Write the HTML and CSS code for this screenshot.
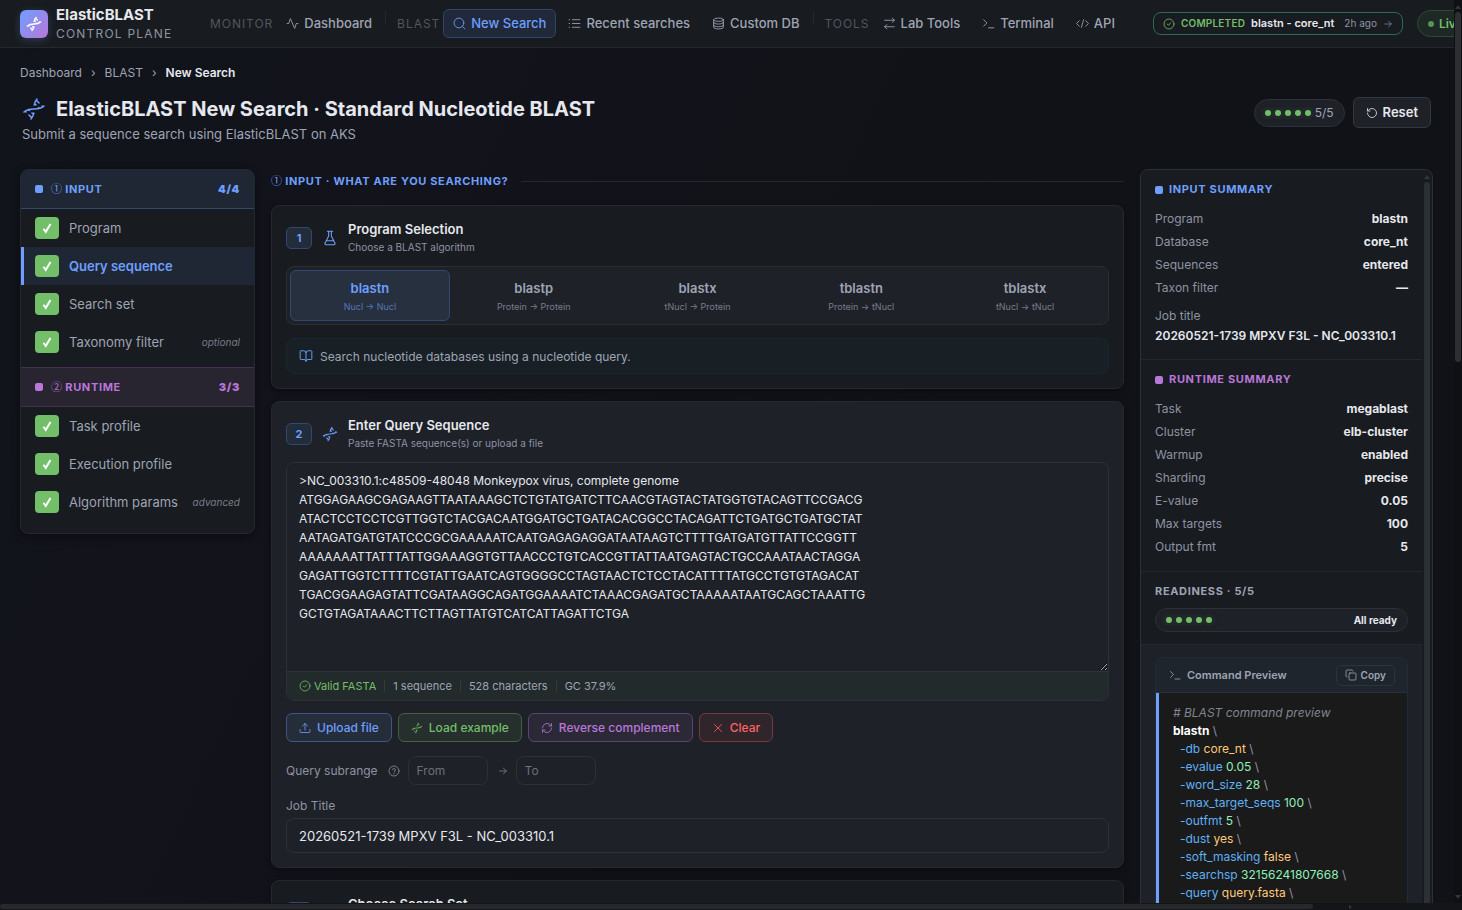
FILE: index.html
```html
<!DOCTYPE html>
<html lang="en">
<head>
<meta charset="utf-8">
<title>ElasticBLAST Control Plane</title>
<link rel="stylesheet" href="styles.css">
</head>
<body>
<svg class="defs" aria-hidden="true">
  <symbol id="dna" viewBox="0 0 24 24"><path d="M2 15c6.667-6 13.333 0 20-6M9 22c1.798-1.998 2.518-3.995 2.807-5.993M15 2c-1.798 1.998-2.518 3.995-2.807 5.993M17 6l-2.500-2.500M14 8l-1-1M7 18l2.500 2.500M3.500 14.500l.5.5M20 9l.5.5M6.500 12.500l1 1M16.500 10.500l1 1M10 16l1.500 1.500"/></symbol>
  <symbol id="activity" viewBox="0 0 24 24"><path d="M22 12h-3l-3 9L8 3l-3 9H2"/></symbol>
  <symbol id="search" viewBox="0 0 24 24"><circle cx="11" cy="11" r="9"/><path d="M22 22l-4.500-4.500"/></symbol>
  <symbol id="list" viewBox="0 0 24 24"><path d="M8 5h14M8 12h14M8 19h14M2 5h1M2 12h1M2 19h1"/></symbol>
  <symbol id="db" viewBox="0 0 24 24"><ellipse cx="12" cy="5" rx="9" ry="3"/><path d="M3 5v14c0 1.700 4 3 9 3s9-1.300 9-3V5M3 10c0 1.700 4 3 9 3s9-1.300 9-3M3 15c0 1.700 4 3 9 3s9-1.300 9-3"/></symbol>
  <symbol id="swap" viewBox="0 0 24 24"><path d="M17 2l4 4-4 4M3 6h18M7 22l-4-4 4-4M21 18H3"/></symbol>
  <symbol id="term" viewBox="0 0 24 24"><path d="M3 17l6-6-6-6M12 20h10"/></symbol>
  <symbol id="code" viewBox="0 0 24 24"><path d="M18 17l5-5-5-5M6 7l-5 5 5 5M14 5l-4 14"/></symbol>
  <symbol id="okay" viewBox="0 0 24 24"><circle cx="12" cy="12" r="10"/><path d="M8.500 12l2.500 2.500 4.500-5"/></symbol>
  <symbol id="arrow" viewBox="0 0 24 24"><path d="M4 12h16M13 5l7 7-7 7"/></symbol>
  <symbol id="reset" viewBox="0 0 24 24"><path d="M3 12a9 9 0 1 0 9-9 9.750 9.750 0 0 0-6.740 2.740L3 8M3 3v5h5"/></symbol>
  <symbol id="flask" viewBox="0 0 24 24"><path d="M8 2h8M10 2v7L4.500 20c-.5 1 .2 2 1.300 2h12.400c1.100 0 1.800-1 1.300-2L14 9V2M7 16h10"/></symbol>
  <symbol id="book" viewBox="0 0 24 24"><path d="M12 7v14M3 18a1 1 0 0 1-1-1V4a1 1 0 0 1 1-1h5a4 4 0 0 1 4 4 4 4 0 0 1 4-4h5a1 1 0 0 1 1 1v13a1 1 0 0 1-1 1h-6a3 3 0 0 0-3 3 3 3 0 0 0-3-3z"/></symbol>
  <symbol id="upload" viewBox="0 0 24 24"><path d="M12 3v13M7 8l5-5 5 5M2 15v4a2 2 0 0 0 2 2h16a2 2 0 0 0 2-2v-4"/></symbol>
  <symbol id="refresh" viewBox="0 0 24 24"><path d="M3 12a9 9 0 0 1 9-9 9.750 9.750 0 0 1 6.740 2.740L21 8M21 3v5h-5M21 12a9 9 0 0 1-9 9 9.750 9.750 0 0 1-6.740-2.740L3 16M8 16H3v5"/></symbol>
  <symbol id="cross" viewBox="0 0 24 24"><path d="M19 5L5 19M5 5l14 14"/></symbol>
  <symbol id="help" viewBox="0 0 24 24"><circle cx="12" cy="12" r="10"/><path d="M9 9a3 3 0 0 1 5.800 1c0 2-2.800 2.500-2.800 4M12 17v.5"/></symbol>
  <symbol id="copy" viewBox="0 0 24 24"><rect x="8" y="8" width="14" height="14" rx="2"/><path d="M4 16c-1.100 0-2-.9-2-2V4c0-1.100.9-2 2-2h10c1.100 0 2 .9 2 2"/></symbol>
  <symbol id="tick" viewBox="0 0 24 24"><path d="M5 13.500L9.500 20 19 4"/></symbol>
</svg>
<div class="shell">
<div class="app">
  <header class="topbar">
    <div class="logo"><svg class="ico i16"><use href="#dna"/></svg></div>
    <div class="brand"><strong>ElasticBLAST</strong><span>CONTROL PLANE</span></div>
    <nav class="nav" aria-label="Main">
      <span class="nav-label">MONITOR</span>
      <a class="nav-item" href="#"><svg class="ico i13"><use href="#activity"/></svg>Dashboard</a>
      <span class="nav-sep"></span>
      <span class="nav-label">BLAST</span>
      <a class="nav-item on" href="#"><svg class="ico i13"><use href="#search"/></svg>New Search</a>
      <a class="nav-item" href="#"><svg class="ico i13"><use href="#list"/></svg>Recent searches</a>
      <a class="nav-item" href="#"><svg class="ico i13"><use href="#db"/></svg>Custom DB</a>
      <span class="nav-sep"></span>
      <span class="nav-label">TOOLS</span>
      <a class="nav-item" href="#"><svg class="ico i13"><use href="#swap"/></svg>Lab Tools</a>
      <a class="nav-item" href="#"><svg class="ico i13"><use href="#term"/></svg>Terminal</a>
      <a class="nav-item" href="#"><svg class="ico i13"><use href="#code"/></svg>API</a>
    </nav>
    <a class="job-pill" href="#"><svg class="ico i12"><use href="#okay"/></svg><span class="done">COMPLETED</span><strong>blastn - core_nt</strong><span class="ago">2h ago</span><svg class="ico i10"><use href="#arrow"/></svg></a>
    <button class="live" type="button"><i></i>Live</button>
  </header>

  <div class="page">
    <nav class="crumbs" aria-label="Breadcrumb"><a href="#">Dashboard</a><span>›</span><a href="#">BLAST</a><span>›</span><b>New Search</b></nav>
    <div class="page-head">
      <div>
        <h1><svg class="ico i24"><use href="#dna"/></svg>ElasticBLAST New Search · Standard Nucleotide BLAST</h1>
        <p>Submit a sequence search using ElasticBLAST on AKS</p>
      </div>
      <div class="head-actions">
        <div class="score"><span class="dots"><i></i><i></i><i></i><i></i><i></i></span>5/5</div>
        <button class="reset" type="button"><svg class="ico i12"><use href="#reset"/></svg>Reset</button>
      </div>
    </div>

    <div class="columns">
      <aside class="steps">
        <div class="group blue"><i></i><span><span class="circled">①</span> INPUT</span><b>4/4</b></div>
        <ul>
          <li><a href="#"><span class="check"><svg class="i12"><use href="#tick"/></svg></span>Program</a></li>
          <li><a class="on" href="#"><span class="check"><svg class="i12"><use href="#tick"/></svg></span>Query sequence</a></li>
          <li><a href="#"><span class="check"><svg class="i12"><use href="#tick"/></svg></span>Search set</a></li>
          <li><a href="#"><span class="check"><svg class="i12"><use href="#tick"/></svg></span>Taxonomy filter<em>optional</em></a></li>
        </ul>
        <div class="group purple"><i></i><span><span class="circled">②</span> RUNTIME</span><b>3/3</b></div>
        <ul>
          <li><a href="#"><span class="check"><svg class="i12"><use href="#tick"/></svg></span>Task profile</a></li>
          <li><a href="#"><span class="check"><svg class="i12"><use href="#tick"/></svg></span>Execution profile</a></li>
          <li><a href="#"><span class="check"><svg class="i12"><use href="#tick"/></svg></span>Algorithm params<em>advanced</em></a></li>
        </ul>
      </aside>

      <main class="main">
        <h2 class="band"><span><span class="circled">①</span> INPUT · WHAT ARE YOU SEARCHING?</span></h2>

        <section class="card">
          <header class="card-head">
            <span class="num">1</span><svg class="ico i16"><use href="#flask"/></svg>
            <div><h3>Program Selection</h3><p>Choose a BLAST algorithm</p></div>
          </header>
          <div class="tabs">
            <button class="on" type="button"><b>blastn</b><small>Nucl → Nucl</small></button>
            <button type="button"><b>blastp</b><small>Protein → Protein</small></button>
            <button type="button"><b>blastx</b><small>tNucl → Protein</small></button>
            <button type="button"><b>tblastn</b><small>Protein → tNucl</small></button>
            <button type="button"><b>tblastx</b><small>tNucl → tNucl</small></button>
          </div>
          <div class="info"><svg class="ico i14"><use href="#book"/></svg>Search nucleotide databases using a nucleotide query.</div>
        </section>

        <section class="card focus">
          <header class="card-head">
            <span class="num">2</span><svg class="ico i16"><use href="#dna"/></svg>
            <div><h3>Enter Query Sequence</h3><p>Paste FASTA sequence(s) or upload a file</p></div>
          </header>
          <div class="editor">
            <textarea aria-label="Query sequence" spellcheck="false">&gt;NC_003310.1:c48509-48048 Monkeypox virus, complete genome
ATGGAGAAGCGAGAAGTTAATAAAGCTCTGTATGATCTTCAACGTAGTACTATGGTGTACAGTTCCGACG
ATACTCCTCCTCGTTGGTCTACGACAATGGATGCTGATACACGGCCTACAGATTCTGATGCTGATGCTAT
AATAGATGATGTATCCCGCGAAAAATCAATGAGAGAGGATAATAAGTCTTTTGATGATGTTATTCCGGTT
AAAAAAATTATTTATTGGAAAGGTGTTAACCCTGTCACCGTTATTAATGAGTACTGCCAAATAACTAGGA
GAGATTGGTCTTTTCGTATTGAATCAGTGGGGCCTAGTAACTCTCCTACATTTTATGCCTGTGTAGACAT
TGACGGAAGAGTATTCGATAAGGCAGATGGAAAATCTAAACGAGATGCTAAAAATAATGCAGCTAAATTG
GCTGTAGATAAACTTCTTAGTTATGTCATCATTAGATTCTGA</textarea>
            <div class="status"><span class="ok"><svg class="ico i12"><use href="#okay"/></svg>Valid FASTA</span><span>1 sequence</span><span>528 characters</span><span>GC 37.9%</span></div>
          </div>
          <div class="actions">
            <button class="btn blue" type="button"><svg class="ico i12"><use href="#upload"/></svg>Upload file</button>
            <button class="btn green" type="button"><svg class="ico i12"><use href="#dna"/></svg>Load example</button>
            <button class="btn purple" type="button"><svg class="ico i12"><use href="#refresh"/></svg>Reverse complement</button>
            <button class="btn red" type="button"><svg class="ico i12"><use href="#cross"/></svg>Clear</button>
          </div>
          <div class="range">
            <label for="from">Query subrange</label><svg class="ico i12"><use href="#help"/></svg>
            <input id="from" type="text" placeholder="From">
            <svg class="ico i10"><use href="#arrow"/></svg>
            <input type="text" placeholder="To" aria-label="Query subrange end">
          </div>
          <label class="field-label" for="job">Job Title</label>
          <input class="field" id="job" type="text" value="20260521-1739 MPXV F3L - NC_003310.1">
        </section>

        <section class="card">
          <header class="card-head">
            <span class="num">3</span><svg class="ico i16"><use href="#db"/></svg>
            <div><h3>Choose Search Set</h3></div>
          </header>
        </section>
      </main>

      <aside class="summary">
        <div class="summary-body">
          <section>
            <h4 class="blue"><i></i>INPUT SUMMARY</h4>
            <dl>
              <div><dt>Program</dt><dd>blastn</dd></div>
              <div><dt>Database</dt><dd>core_nt</dd></div>
              <div><dt>Sequences</dt><dd>entered</dd></div>
              <div><dt>Taxon filter</dt><dd>—</dd></div>
              <div class="stack"><dt>Job title</dt><dd>20260521-1739 MPXV F3L - NC_003310.1</dd></div>
            </dl>
          </section>
          <section>
            <h4 class="purple"><i></i>RUNTIME SUMMARY</h4>
            <dl>
              <div><dt>Task</dt><dd>megablast</dd></div>
              <div><dt>Cluster</dt><dd>elb-cluster</dd></div>
              <div><dt>Warmup</dt><dd>enabled</dd></div>
              <div><dt>Sharding</dt><dd>precise</dd></div>
              <div><dt>E-value</dt><dd>0.05</dd></div>
              <div><dt>Max targets</dt><dd>100</dd></div>
              <div><dt>Output fmt</dt><dd>5</dd></div>
            </dl>
          </section>
          <section class="ready-sec">
            <h4>READINESS · 5/5</h4>
            <div class="ready"><span class="dots"><i></i><i></i><i></i><i></i><i></i></span><b>All ready</b></div>
          </section>
          <section class="cmd-sec">
            <div class="cmd">
              <header><svg class="ico i12"><use href="#term"/></svg><b>Command Preview</b><button type="button"><svg class="ico i12"><use href="#copy"/></svg>Copy</button></header>
              <code>
                <span class="ln top c"># BLAST command preview</span>
                <span class="ln top"><b>blastn</b> \</span>
                <span class="ln"><span class="f">-db</span> <span class="s">core_nt</span> \</span>
                <span class="ln"><span class="f">-evalue</span> <span class="n">0.05</span> \</span>
                <span class="ln"><span class="f">-word_size</span> <span class="n">28</span> \</span>
                <span class="ln"><span class="f">-max_target_seqs</span> <span class="n">100</span> \</span>
                <span class="ln"><span class="f">-outfmt</span> <span class="n">5</span> \</span>
                <span class="ln"><span class="f">-dust</span> <span class="s">yes</span> \</span>
                <span class="ln"><span class="f">-soft_masking</span> <span class="s">false</span> \</span>
                <span class="ln"><span class="f">-searchsp</span> <span class="n">32156241807668</span> \</span>
                <span class="ln"><span class="f">-query</span> <span class="s">query.fasta</span> \</span>
              </code>
            </div>
          </section>
        </div>
        <div class="rail"><i class="up"></i><span></span></div>
      </aside>
    </div>
  </div>
</div>
<div class="rail page-rail"><i class="up"></i><span></span><i class="down"></i></div>
<div class="hrail"><span></span><i></i></div>
</div>
</body>
</html>
```
FILE: styles.css
```css
* { box-sizing: border-box; }
body, h1, h2, h3, h4, p, ul, dl, dd { margin: 0; padding: 0; }
body { background: #111217; color: #e6e8ee; font-family: Inter, "Liberation Sans", sans-serif; font-size: 12px; line-height: 19px; overflow: hidden; }
button, input, textarea { font: inherit; color: inherit; margin: 0; }
button { cursor: pointer; }
a { color: inherit; text-decoration: none; }
ul { list-style: none; }
i { display: block; }

.defs { position: absolute; width: 0; height: 0; }
.ico { fill: none; stroke: currentColor; stroke-width: 1.6; stroke-linecap: round; stroke-linejoin: round; }
svg { flex: none; }
.i10 { width: 10px; height: 10px; }
.i12 { width: 12px; height: 12px; }
.i13 { width: 13px; height: 13px; }
.i14 { width: 14px; height: 14px; }
.i16 { width: 16px; height: 16px; }
.i24 { width: 24px; height: 24px; }
.circled { font-family: "Noto Sans CJK JP", sans-serif; font-weight: 400; line-height: 1; letter-spacing: 0; }

.shell { display: grid; grid-template-columns: minmax(0, 1fr) 8px; grid-template-rows: minmax(0, 1fr) 7px; height: 100vh; }
.app { overflow: hidden; background: linear-gradient(115deg, #11141b 0, #12131b 25%, #111217 60%); }

.topbar { display: flex; align-items: center; height: 48px; padding-left: 20px; background: #181b1f; border-bottom: 1px solid #25282e; white-space: nowrap; }
.logo { display: grid; place-items: center; flex: none; width: 28px; height: 28px; border-radius: 6px; color: #fff; background: linear-gradient(135deg, #6e9fff, #b877d9); box-shadow: 0 2px 8px #6e9fff40; }
.logo svg { stroke-width: 2; }
.brand { display: flex; flex-direction: column; flex: none; width: 154px; padding-left: 8px; line-height: 19px; }
.brand strong { font-size: 15px; font-weight: 700; }
.brand span { color: #8e93a3; letter-spacing: 0.1em; }
.nav { display: flex; align-items: center; flex: none; gap: 2px; }
.nav-label { padding: 0 1px 0 8px; color: #53565f; font-size: 12px; letter-spacing: 0.08em; }
.nav-item { display: flex; align-items: center; gap: 5px; height: 29px; padding: 0 9px; border: 1px solid transparent; border-radius: 6px; color: #9fa4b4; font-size: 13px; font-weight: 500; }
.nav-item.on { color: #6e9fff; background: #202839; border-color: #31446c; }
.nav-sep { width: 1px; height: 14px; margin: 0 1px 12px; background: #25282e; }
.job-pill { display: flex; align-items: center; flex: none; gap: 6px; height: 23px; margin-left: 28px; padding: 0 9px; border: 1px solid #2f6a50; border-radius: 8px; color: #8e93a3; font-size: 11px; }
.job-pill .ico:first-child, .job-pill .done { color: #73bf69; }
.job-pill .done { font-size: 10px; font-weight: 600; letter-spacing: 0.02em; }
.job-pill strong { color: #e6e8ee; font-weight: 600; }
.job-pill .ago { padding-left: 4px; font-size: 10px; }
.live { display: flex; align-items: center; flex: none; gap: 5px; height: 27px; margin-left: 14px; padding: 0 10px; border: 1px solid #2e4a31; border-radius: 14px; background: #1e2824; color: #73bf69; font-weight: 600; }
.live i { width: 6px; height: 6px; border-radius: 50%; background: #5a9354; }

.page { padding: 15px 21px 0 20px; }
.crumbs { display: flex; gap: 9px; color: #9fa4b4; }
.crumbs b { color: #e6e8ee; font-weight: 600; }
.page-head { display: flex; justify-content: space-between; align-items: flex-start; padding: 14px 2px 23px; }
h1 { display: flex; align-items: center; gap: 10px; font-size: 20px; line-height: 26px; font-weight: 700; }
h1 svg { color: #6e9fff; }
.page-head p { color: #9fa4b4; font-size: 13px; line-height: 24px; }
.head-actions { display: flex; align-items: center; gap: 8px; padding-top: 1px; }
.score { display: flex; align-items: center; gap: 4px; height: 28px; padding: 0 10px; border: 1px solid #2c3037; border-radius: 14px; background: #1e2128; color: #9fa4b4; }
.dots { display: flex; gap: 4px; }
.dots i { width: 6px; height: 6px; border-radius: 50%; background: #73bf69; box-shadow: 0 0 6px #73bf6940; }
.reset { display: flex; align-items: center; gap: 5px; height: 31px; padding: 0 12px; border: 1px solid #34373e; border-radius: 6px; background: #1e2128; font-size: 13px; font-weight: 600; }

.columns { display: grid; grid-template-columns: 235px minmax(0, 1fr) 293px; gap: 16px; align-items: start; }

.steps { overflow: hidden; padding-bottom: 6px; border: 1px solid #25282e; border-radius: 8px; background: #181b1f; box-shadow: 0 2px 8px #0006; }
.group { display: flex; align-items: center; gap: 8px; height: 39px; padding: 0 14px; border-bottom: 1px solid; font-size: 11px; font-weight: 700; letter-spacing: 0.06em; }
.group i, .summary h4 i { width: 8px; height: 8px; border-radius: 2px; background: currentColor; }
.group b { margin-left: auto; }
.group.blue { color: #6e9fff; background: #202734; border-color: #33476f; }
.group.purple { height: 40px; color: #b877d9; background: #282430; border-top: 1px solid #43334f; border-color: #43334f; }
.steps ul { padding-bottom: 6px; }
.steps li a { display: flex; align-items: center; gap: 10px; height: 38px; padding: 0 14px 0 11px; border-left: 3px solid transparent; color: #9fa4b4; font-size: 13px; }
.steps li a.on { color: #6e9fff; font-weight: 600; background: #202734; border-color: #6e9fff; }
.check { display: grid; place-items: center; width: 24px; height: 22px; border-radius: 4px; background: #73bf69; }
.check svg { fill: none; stroke: #fff; stroke-width: 4; }
.steps em { margin-left: auto; color: #787d8a; font-size: 10px; }

.main { display: grid; gap: 12px; padding-top: 3px; }
.band { display: flex; align-items: center; gap: 13px; color: #6e9fff; font-size: 11px; font-weight: 700; letter-spacing: 0.06em; line-height: 19px; padding-bottom: 2px; }
.band::after { content: ""; flex: 1; height: 1px; background: #25282e; }
.card { padding: 14px; border: 1px solid #25282e; border-radius: 8px; background: #181b1f; box-shadow: 0 2px 6px #0006; }
.card.focus { background: #1e2128; }
.card-head { display: flex; align-items: center; gap: 10px; padding-bottom: 10px; color: #6e9fff; }
.card-head > div { min-height: 36px; }
.num { display: grid; place-items: center; width: 26px; height: 22px; border: 1px solid #33476f; border-radius: 5px; background: #232c3b; font-size: 11px; font-weight: 700; }
h3 { color: #e6e8ee; font-size: 13px; font-weight: 600; line-height: 18px; }
.card-head p { color: #8e93a3; font-size: 10px; line-height: 18px; }
.tabs { display: grid; grid-template-columns: repeat(5, minmax(0, 1fr)); gap: 4px; padding: 3px; border: 1px solid #2a2d34; border-radius: 8px; background: #1e2128; }
.tabs button { display: flex; flex-direction: column; align-items: center; padding: 8px 0 5px; border: 1px solid transparent; border-radius: 6px; background: none; color: #9fa4b4; }
.tabs b { font-size: 13px; font-weight: 600; line-height: 19px; }
.tabs small { color: #787d8a; font-size: 9px; line-height: 17px; }
.tabs button.on { color: #6e9fff; background: #27303f; border-color: #33476f; }
.tabs .on small { color: #5577b8; }
.info { display: flex; align-items: center; gap: 7px; height: 36px; margin-top: 13px; padding: 0 12px; border: 1px solid #182832; border-radius: 8px; background: #182026; color: #9fa4b4; }
.info svg { color: #6e9fff; }

.editor { border: 1px solid #2c3037; border-radius: 8px; overflow: hidden; }
.editor textarea { display: block; width: 100%; height: 208px; padding: 8px 12px; border: 0; outline: 0; background: #1e2128; line-height: 19px; resize: vertical; }
.status { display: flex; align-items: center; height: 29px; padding: 0 12px; border-top: 1px solid #2c3433; background: #232a2b; color: #9fa4b4; font-size: 11px; line-height: 12px; }
.status span + span { margin-left: 8px; padding-left: 8px; border-left: 1px solid #353a3e; }
.status .ok { display: flex; gap: 3px; color: #73bf69; }
.actions { display: flex; gap: 6px; padding: 12px 0 14px; }
.btn { display: flex; align-items: center; gap: 6px; height: 29px; padding: 0 12px; border: 1px solid; border-radius: 6px; font-weight: 500; }
.btn.blue { color: #6e9fff; background: #252d3b; border-color: #3f5683; }
.btn.green { color: #73bf69; background: #262f2e; border-color: #41623f; }
.btn.purple { color: #b877d9; background: #2c2937; border-color: #5c4272; }
.btn.red { color: #ff6363; background: #30252b; border-color: #713a41; }
.range { display: flex; align-items: center; gap: 8px; color: #8e93a3; }
.range label { padding-right: 2px; }
.range input { width: 80px; height: 29px; padding: 0 8px; border: 1px solid #2c3037; border-radius: 8px; background: none; }
.range input:first-of-type { margin-right: 2px; }
::placeholder { color: #6b7079; }
.field-label { display: block; padding: 11px 0 3px; color: #8e93a3; }
.field { display: block; width: 100%; height: 35px; padding: 0 12px; border: 1px solid #2c3037; border-radius: 8px; background: none; font-size: 13px; }

.summary { display: flex; border: 1px solid #2c3037; border-radius: 8px; background: #181b1f; overflow: hidden; }
.summary-body { flex: 1; min-width: 0; }
.summary section { padding: 10px 14px 13px; border-bottom: 1px solid #25282e; }
h4 { display: flex; align-items: center; gap: 6px; color: #9fa4b4; font-size: 11px; font-weight: 700; letter-spacing: 0.06em; line-height: 19px; }
h4.blue { color: #6e9fff; }
h4.purple { color: #b877d9; }
dl { padding-top: 8px; }
dl div { display: flex; justify-content: space-between; line-height: 23px; }
dt { color: #8e93a3; }
dd { font-weight: 700; }
dl .stack { flex-direction: column; padding-top: 7px; line-height: 20px; }
.stack dd { font-weight: 600; }
.summary .ready-sec { padding: 10px 14px 12px; }
.ready { display: flex; align-items: center; justify-content: space-between; height: 24px; margin-top: 7px; padding: 0 10px; border: 1px solid #2c3037; border-radius: 12px; background: #1e2128; }
.ready b { font-size: 10px; font-weight: 700; }
.summary .cmd-sec { padding-top: 12px; background: #1e2128; }
.cmd { border: 1px solid #1e2d3a; border-radius: 8px; overflow: hidden; }
.cmd header { display: flex; align-items: center; gap: 6px; height: 35px; padding: 0 12px 0 13px; border-bottom: 1px solid #25333d; background: #1e252d; color: #9fa4b4; font-size: 11px; }
.cmd header b { font-weight: 600; }
.cmd header button { display: flex; align-items: center; gap: 4px; height: 21px; margin-left: auto; padding: 0 8px; border: 1px solid #2c343d; border-radius: 5px; background: none; font-size: 10px; font-weight: 600; }
code { display: block; padding: 11px 14px; border-left: 3px solid #6e9fff; background: #1a1a1a; color: #8e93a3; font: inherit; line-height: 18px; white-space: nowrap; }
.ln { display: block; padding-left: 7px; }
.ln.top { padding-left: 0; }
.ln b { color: #fff; }
.c { color: #808590; font-style: italic; }
.f { color: #5fb0f5; }
.s { color: #ffc97a; }
.n { color: #8ff0b8; }

.rail { display: flex; flex-direction: column; align-items: center; width: 10px; padding-top: 5px; }
.rail span { flex: 1; width: 6px; margin-top: 3px; border-radius: 3px; background: #2c2f33; }
.up { border: 3px solid transparent; border-top: 0; border-bottom: 4px solid #34363b; }
.down { border: 3px solid transparent; border-bottom: 0; border-top: 4px solid #34363b; }
.page-rail { width: 8px; background: #0f1013; }
.page-rail span { flex: 0 0 39%; }
.page-rail .down { margin: auto 0 4px; }
.hrail { grid-column: 1 / -1; display: flex; align-items: center; justify-content: space-between; padding-right: 110px; background: #141518; }
.hrail span { flex: 1; height: 5px; border-radius: 3px; background: #26282c; }
.hrail i { margin-left: 36px; border: 2px solid transparent; border-right: 0; border-left: 3px solid #34363b; }
```
